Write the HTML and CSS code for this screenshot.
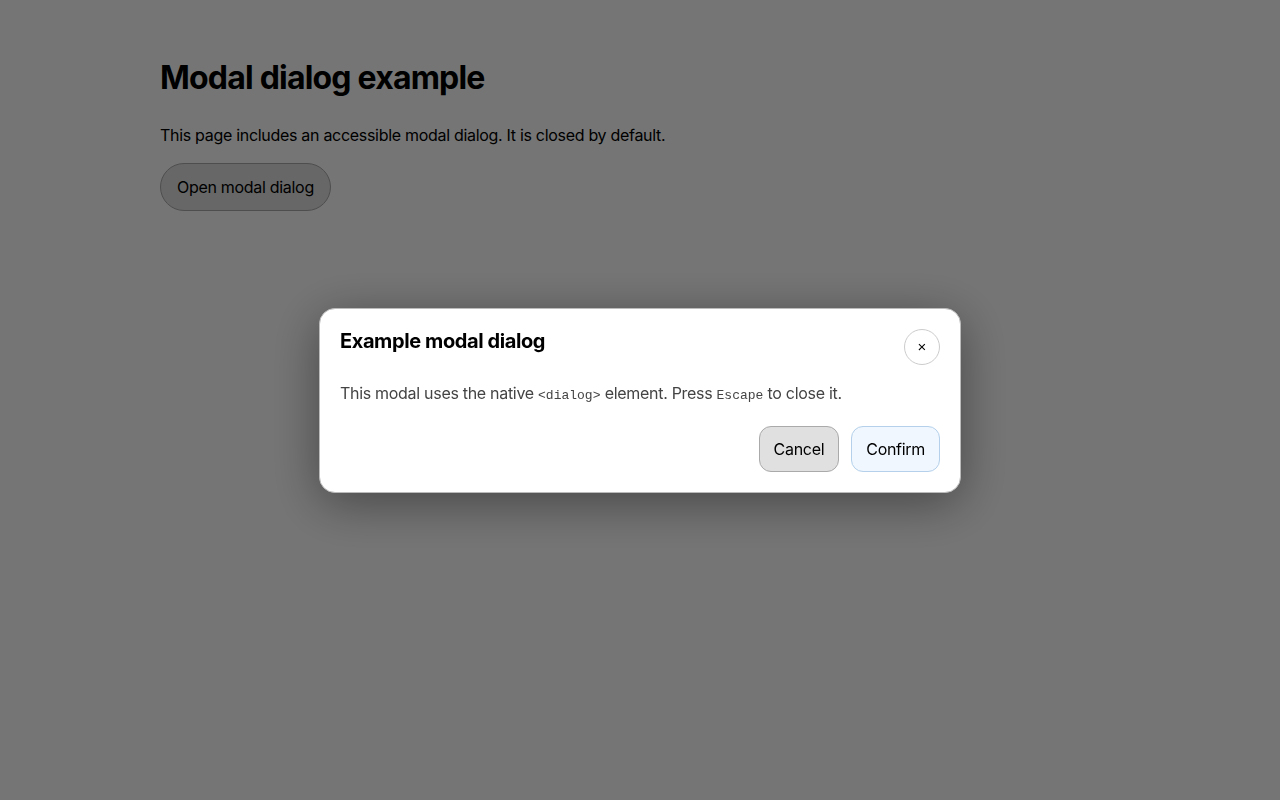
FILE: index.html
```html
<!DOCTYPE html>
<html lang="en">
<head>
    <meta charset="UTF-8">
    <meta name="viewport" content="width=device-width, initial-scale=1.0">
    <title>Modal dialog example</title>
    <link rel="stylesheet" href="styles.css">
</head>
<body>
    <main class="page">
      <h1>Modal dialog example</h1>
      <p>This page includes an accessible modal dialog. It is closed by default.</p>
      <button class="btn btn-open" type="button">Open modal dialog</button>
    </main>

    <div class="backdrop">
      <div class="modal" role="dialog" aria-modal="true" aria-labelledby="modalTitle">
        <div class="modal-header">
          <h2 id="modalTitle">Example modal dialog</h2>
          <button class="close-btn" type="button" aria-label="Close">&times;</button>
        </div>
        <p class="modal-text">This modal uses the native <code>&lt;dialog&gt;</code> element. Press <code>Escape</code> to close it.</p>
        <div class="modal-actions">
          <button class="btn btn-cancel" type="button">Cancel</button>
          <button class="btn btn-confirm" type="button">Confirm</button>
        </div>
      </div>
    </div>
</body>
</html>
```

FILE: styles.css
```css
* {
    box-sizing: border-box;
    margin: 0;
    padding: 0;
}

body {
    font-family: Inter, 'Noto Sans', sans-serif;
    background: #fff;
    color: #000;
    letter-spacing: -0.3px;
}

.page {
    max-width: 960px;
    margin: 0 auto;
    padding-top: 58px;
}

h1 {
    font-size: 32px;
    line-height: 40px;
    font-weight: 700;
    letter-spacing: -0.8px;
    margin-bottom: 25px;
}

.page p {
    font-size: 16px;
    line-height: 24px;
    margin-bottom: 16px;
}

.btn {
    font-family: inherit;
    font-size: 16px;
    line-height: 20px;
    letter-spacing: -0.3px;
    color: #000;
    cursor: pointer;
}

.btn-open {
    background: #e0e0e0;
    border: 1px solid #aaa;
    border-radius: 24px;
    padding: 13px 16px;
}

/* overlay */
.backdrop {
    position: fixed;
    inset: 0;
    background: rgba(0, 0, 0, 0.54);
    display: flex;
    align-items: center;
    justify-content: center;
}

.modal {
    width: 642px;
    background: #fff;
    border: 1px solid #bbb;
    border-radius: 16px;
    padding: 20px;
    box-shadow: 0 10px 50px rgba(0, 0, 0, 0.4);
}

.modal-header {
    display: flex;
    justify-content: space-between;
    align-items: flex-start;
}

.modal-header h2 {
    font-size: 20px;
    line-height: 24px;
    font-weight: 700;
    letter-spacing: -0.4px;
}

.close-btn {
    width: 36px;
    height: 36px;
    border-radius: 50%;
    border: 1px solid #ccc;
    background: #fff;
    font-size: 15px;
    line-height: 1;
    color: #000;
    cursor: pointer;
}

.modal-text {
    margin-top: 16px;
    font-size: 16px;
    line-height: 24px;
    color: #444;
}

.modal-text code {
    font-family: 'Liberation Mono', 'DejaVu Sans Mono', monospace;
    font-size: 13px;
    letter-spacing: 0;
}

.modal-actions {
    display: flex;
    justify-content: flex-end;
    gap: 12px;
    margin-top: 18px;
}

.btn-cancel {
    background: #e0e0e0;
    border: 1px solid #aaa;
    border-radius: 12px;
    padding: 12px 14px;
}

.btn-confirm {
    background: #f0f7ff;
    border: 1px solid #b4d0ea;
    border-radius: 12px;
    padding: 12px 14px;
}
```
